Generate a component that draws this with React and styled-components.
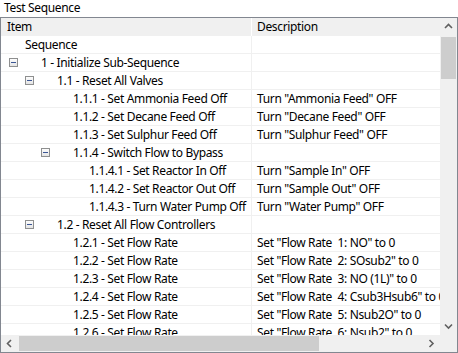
import React from "react";
import styled, { createGlobalStyle } from "styled-components";

const Global = createGlobalStyle`
  html, body { margin: 0; padding: 0; background: #ffffff; }
  body { font-family: "Noto Sans", "Open Sans", sans-serif; font-size: 12px; color: #000; letter-spacing: -0.35px; }
`;

const Page = styled.div`
  width: 458px;
  height: 353px;
  display: flex;
  flex-direction: column;
  background: #fff;
  overflow: hidden;
`;

const Title = styled.div`
  height: 17px;
  line-height: 16px;
  padding-left: 4px;
  font-size: 12px;
`;

const Frame = styled.div`
  width: 458px;
  height: 336px;
  box-sizing: border-box;
  border: 1px solid #828790;
  display: grid;
  grid-template-columns: 439px 17px;
  grid-template-rows: 317px 17px;
`;

const View = styled.div`
  overflow: hidden;
  display: flex;
  flex-direction: column;
`;

const HeaderRow = styled.div`
  display: grid;
  grid-template-columns: 250px 189px;
  height: 18px;
  background: #f0f0f0;
  flex: none;
`;

const HeaderCell = styled.div`
  line-height: 18px;
  padding-left: ${(p) => (p.$first ? "6px" : "5px")};
  border-left: ${(p) => (p.$first ? "none" : "1px solid #ffffff")};
  white-space: nowrap;
  overflow: hidden;
`;

const Row = styled.div`
  display: grid;
  grid-template-columns: 250px 189px;
  height: 18px;
  flex: none;
  box-sizing: border-box;
  border-bottom: 1px solid #f0f0f0;
`;

const ItemCell = styled.div`
  position: relative;
  line-height: 18px;
  padding-left: ${(p) => 24 + 16 * p.$depth}px;
  white-space: pre;
  overflow: hidden;
`;

const DescCell = styled.div`
  line-height: 18px;
  padding-left: 5px;
  border-left: 1px solid #f0f0f0;
  white-space: pre;
  overflow: hidden;
`;

const Expander = styled.svg`
  position: absolute;
  top: 4px;
  left: ${(p) => 8 + 16 * (p.$depth - 1)}px;
`;

const VScroll = styled.div`
  background: #f0f0f0;
  display: flex;
  flex-direction: column;
  align-items: center;
`;

const HScroll = styled.div`
  background: #f0f0f0;
  display: flex;
  align-items: center;
`;

const ArrowBox = styled.div`
  width: 17px;
  height: 17px;
  flex: none;
  display: flex;
  align-items: center;
  justify-content: center;
`;

const VThumb = styled.div`
  width: 15px;
  height: 42px;
  background: #cdcdcd;
  margin-top: 2px;
`;

const HTrack = styled.div`
  flex: 1;
  height: 17px;
  display: flex;
  align-items: center;
`;

const HThumb = styled.div`
  width: 300px;
  height: 15px;
  background: #cdcdcd;
  margin-left: 1px;
`;

const VSpacer = styled.div`
  flex: 1;
`;

const Corner = styled.div`
  background: #f0f0f0;
`;

const Chevron = ({ dir }) => {
  const paths = {
    up: "M1 5 L4.5 1.5 L8 5",
    down: "M1 1.5 L4.5 5 L8 1.5",
    left: "M5 1 L1.5 4.5 L5 8",
    right: "M1.5 1 L5 4.5 L1.5 8",
  };
  const vertical = dir === "up" || dir === "down";
  return (
    <svg width={vertical ? 9 : 7} height={vertical ? 7 : 9} viewBox={vertical ? "0 0 9 7" : "0 0 7 9"}>
      <path d={paths[dir]} fill="none" stroke="#606060" strokeWidth="1.6" />
    </svg>
  );
};

const Minus = ({ depth }) => (
  <Expander $depth={depth} width="9" height="9" viewBox="0 0 9 9">
    <defs>
      <linearGradient id="eg" x1="0" y1="0" x2="0" y2="1">
        <stop offset="0" stopColor="#ffffff" />
        <stop offset="1" stopColor="#e2e2e2" />
      </linearGradient>
    </defs>
    <rect x="0.5" y="0.5" width="8" height="8" fill="url(#eg)" stroke="#8e8f8f" />
    <rect x="2" y="4" width="5" height="1" fill="#3b5694" />
  </Expander>
);

const rows = [
  { d: 0, t: "Sequence", s: "" },
  { d: 1, t: "1 - Initialize Sub-Sequence", s: "", e: true },
  { d: 2, t: "1.1 - Reset All Valves", s: "", e: true },
  { d: 3, t: "1.1.1 - Set Ammonia Feed Off", s: 'Turn "Ammonia Feed" OFF' },
  { d: 3, t: "1.1.2 - Set Decane Feed Off", s: 'Turn "Decane Feed" OFF' },
  { d: 3, t: "1.1.3 - Set Sulphur Feed Off", s: 'Turn "Sulphur Feed" OFF' },
  { d: 3, t: "1.1.4 - Switch Flow to Bypass", s: "", e: true },
  { d: 4, t: "1.1.4.1 - Set Reactor In Off", s: 'Turn "Sample In" OFF' },
  { d: 4, t: "1.1.4.2 - Set Reactor Out Off", s: 'Turn "Sample Out" OFF' },
  { d: 4, t: "1.1.4.3 - Turn Water Pump Off", s: 'Turn "Water Pump" OFF' },
  { d: 2, t: "1.2 - Reset All Flow Controllers", s: "", e: true },
  { d: 3, t: "1.2.1 - Set Flow Rate", s: 'Set "Flow Rate  1: NO" to 0' },
  { d: 3, t: "1.2.2 - Set Flow Rate", s: 'Set "Flow Rate  2: SOsub2" to 0' },
  { d: 3, t: "1.2.3 - Set Flow Rate", s: 'Set "Flow Rate  3: NO (1L)" to 0' },
  { d: 3, t: "1.2.4 - Set Flow Rate", s: 'Set "Flow Rate  4: Csub3Hsub6" to 0' },
  { d: 3, t: "1.2.5 - Set Flow Rate", s: 'Set "Flow Rate  5: Nsub2O" to 0' },
  { d: 3, t: "1.2.6 - Set Flow Rate", s: 'Set "Flow Rate  6: Nsub2" to 0' },
];

export default function App() {
  return (
    <Page>
      <Global />
      <Title>Test Sequence</Title>
      <Frame>
        <View>
          <HeaderRow>
            <HeaderCell $first>Item</HeaderCell>
            <HeaderCell>Description</HeaderCell>
          </HeaderRow>
          {rows.map((r, i) => (
            <Row key={i}>
              <ItemCell $depth={r.d}>
                {r.e && <Minus depth={r.d} />}
                {r.t}
              </ItemCell>
              <DescCell>{r.s}</DescCell>
            </Row>
          ))}
        </View>
        <VScroll>
          <ArrowBox><Chevron dir="up" /></ArrowBox>
          <VThumb />
          <VSpacer />
          <ArrowBox><Chevron dir="down" /></ArrowBox>
        </VScroll>
        <HScroll>
          <ArrowBox><Chevron dir="left" /></ArrowBox>
          <HTrack><HThumb /></HTrack>
          <ArrowBox><Chevron dir="right" /></ArrowBox>
        </HScroll>
        <Corner />
      </Frame>
    </Page>
  );
}
